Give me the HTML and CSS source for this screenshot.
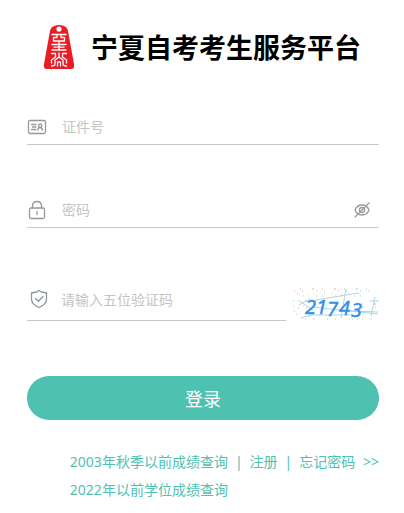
FILE: index.html
```html
<!DOCTYPE html>
<html lang="zh-CN">
<head>
    <meta charset="UTF-8">
    <meta name="viewport" content="width=device-width, initial-scale=1.0">
    <title>宁夏自考考生服务平台</title>
    <link rel="stylesheet" href="styles.css">
</head>
<body>
    <main class="login">
        <header class="brand">
            <svg class="logo" viewBox="0 0 32 46" aria-hidden="true">
                <path fill="#e81d25" fill-rule="evenodd" d="M11 2Q16 0 21 2Q24 3 25 7L31 40Q32 45 28 45H4Q0 45 1 40L7 7Q8 3 11 2ZM16 2.500A2.600 2.600 0 1 0 16 7.700A2.600 2.600 0 1 0 16 2.500Z"/>
                <g fill="none" stroke="#fff" stroke-width="1.300" stroke-linecap="round" stroke-linejoin="round">
                    <path d="M9 10.500H23M14 10.500V13.500H10.500V17H21.500V13.500H18V10.500M16 17V26M9 20.500H23M9 26H23M11 23.200H21"/>
                    <path d="M8.500 29.500H12.500V33L8.500 36M23.500 29.500H19.500V33L23.500 36M16 29V33L12 36V40Q12 42 8.500 42M16 33L20 36V40Q20 42 23.500 42M8.500 36V39M23.500 36V39M14.500 42V38H17.500V42"/>
                </g>
            </svg>
            <h1>宁夏自考考生服务平台</h1>
        </header>

        <form class="login-form">
            <div class="field">
                <label for="idNumber" aria-label="证件号">
                    <svg class="icon" viewBox="0 0 20 20">
                        <rect x="1.500" y="3.500" width="17" height="13" rx="1.500"/>
                        <path d="M4.500 7.500H9M5.500 10H9M4.500 12.500H9M11 13Q11 10.500 13 10.500T15.500 13"/>
                        <circle cx="13.200" cy="8.700" r="1.700"/>
                    </svg>
                </label>
                <input type="text" id="idNumber" placeholder="证件号">
            </div>

            <div class="field">
                <label for="password" aria-label="密码">
                    <svg class="icon" viewBox="0 0 20 20">
                        <rect x="2.500" y="8" width="15" height="10.500" rx="1.500"/>
                        <path d="M5.500 8V6Q5.500 1.500 10 1.500T14.500 6V8M10 11.500V14.500"/>
                    </svg>
                </label>
                <input type="password" id="password" placeholder="密码">
                <button type="button" class="toggle" aria-label="显示密码">
                    <svg class="icon-eye" viewBox="0 0 16 16">
                        <path d="M1 8Q3 3 8 3T15 8Q13 13 8 13T1 8ZM1 15L15 1"/>
                        <circle cx="8" cy="8" r="2.500"/>
                    </svg>
                </button>
            </div>

            <div class="captcha-row">
                <div class="field field-captcha">
                    <label for="captcha" aria-label="验证码">
                        <svg class="icon icon-shield" viewBox="0 0 20 20">
                            <path d="M10 1.500L12.500 3L17.500 4V10Q17.500 15.500 10 18.500Q2.500 15.500 2.500 10V4L7.500 3ZM6.500 9.500L9.300 12.300L14 7.500"/>
                        </svg>
                    </label>
                    <input type="text" id="captcha" placeholder="请输入五位验证码">
                </div>
                <svg class="captcha" viewBox="0 0 87 34" role="img" aria-label="21743">
                    <g fill="none" stroke="#a8d8e6" stroke-width="1">
                        <path d="M6 13L21 23M7 18L18 12M9 31L20 28H58M18 14L66 6M20 20L86 27M54 2L49 31M83 10L79 29M77 14H87M58 24L86 25"/>
                    </g>
                    <g fill="none" stroke-width="1">
                        <path stroke="#e3a9d5" stroke-dasharray="1 7 1 13" d="M2 4H77M6 21H15M13 32H80"/>
                        <path stroke="#9ed79f" stroke-dasharray="1 11 2 8" d="M8 2H75M1 14H19M2 24H16M70 17H86"/>
                        <path stroke="#e4cf89" stroke-dasharray="1 9 1 6" d="M5 7H71M1 19H18M60 32H83"/>
                        <path stroke="#9dd4eb" stroke-dasharray="1 12 1 5" d="M11 9H77M4 27H16M70 20H86"/>
                    </g>
                    <g class="captcha-text">
                        <text x="13" y="27">2</text>
                        <text x="24" y="27">1</text>
                        <text x="35" y="29">7</text>
                        <text x="47" y="28">4</text>
                        <text x="59" y="30">3</text>
                    </g>
                </svg>
            </div>

            <button type="submit" class="submit">登录</button>
        </form>

        <nav class="links">
            <div class="links-row">
                <a href="#">2003年秋季以前成绩查询</a>
                <span>|</span>
                <a href="#">注册</a>
                <span>|</span>
                <a href="#" class="forgot">忘记密码 <span>&gt;&gt;</span></a>
            </div>
            <a href="#">2022年以前学位成绩查询</a>
        </nav>
    </main>
</body>
</html>
```
FILE: styles.css
```css
* {
    box-sizing: border-box;
}

body {
    margin: 0;
    background: #fff;
    font-family: "Noto Sans", "Noto Sans CJK SC", sans-serif;
    font-size: 14px;
}

.login {
    padding: 24px 25px 8px 27px;
}

.brand {
    display: flex;
    align-items: center;
    gap: 16px;
    padding-left: 16px;
}

.logo {
    width: 32px;
    height: 46px;
    flex: none;
}

.brand h1 {
    margin: 0;
    padding-top: 2px;
    font-size: 27px;
    line-height: 44px;
    font-weight: 700;
    color: #000;
    white-space: nowrap;
}

.login-form {
    display: flex;
    flex-direction: column;
    margin-top: 39px;
}

.field {
    display: flex;
    align-items: center;
    height: 36px;
    margin-bottom: 47px;
    border-bottom: 1px solid #c8c8c8;
}

.field label {
    display: flex;
    flex: none;
}

.field input {
    flex: 1;
    min-width: 0;
    height: 34px;
    margin-left: 15px;
    padding: 0;
    border: none;
    outline: none;
    background: transparent;
    font: inherit;
    color: #333;
}

.field input::placeholder {
    color: #c4c4c4;
    opacity: 1;
}

.icon {
    width: 20px;
    height: 20px;
}

.icon,
.icon-eye {
    fill: none;
    stroke: #999;
    stroke-width: 1.3;
    stroke-linecap: round;
    stroke-linejoin: round;
}

.icon-shield {
    stroke: #8b95a3;
}

.toggle {
    display: flex;
    padding: 0;
    margin-right: 9px;
    border: none;
    background: none;
    cursor: pointer;
}

.icon-eye {
    width: 16px;
    height: 16px;
}

.captcha-row {
    display: flex;
    align-items: flex-end;
    gap: 6px;
    margin: 4px 0 55px;
}

.field-captcha {
    flex: 1;
    min-width: 0;
    height: 42px;
    margin-bottom: 0;
    padding-left: 2px;
    align-items: flex-start;
}

.field-captcha label {
    padding-top: 10px;
}

.field-captcha input {
    height: 40px;
    margin-left: 12px;
}

.captcha {
    flex: none;
    width: 87px;
    height: 34px;
    overflow: visible;
    cursor: pointer;
}

.captcha-text {
    fill: #348bea;
    stroke: #348bea;
    stroke-width: 0.4;
    font-family: "Noto Sans", sans-serif;
    font-size: 20px;
    font-style: italic;
}

.submit {
    width: 100%;
    height: 44px;
    padding: 0;
    border: none;
    border-radius: 22px;
    background: #4fc1b1;
    color: #fff;
    font-family: inherit;
    font-size: 18px;
    cursor: pointer;
}

.links {
    width: fit-content;
    margin: 28px 0 0 auto;
    line-height: 28px;
    color: #4fc1b1;
}

.links a {
    color: inherit;
    text-decoration: none;
}

.links-row {
    display: flex;
    gap: 7px;
}

.forgot span {
    margin-left: 4px;
}
```
